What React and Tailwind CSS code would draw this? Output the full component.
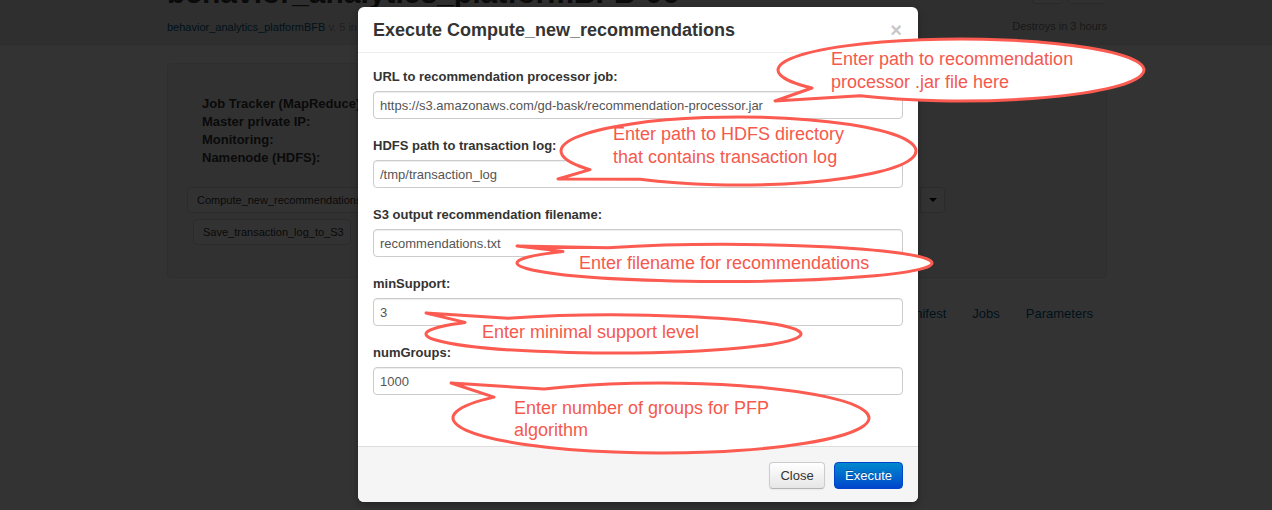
import React from 'react';

const fields = [
  { label: 'URL to recommendation processor job:', value: 'https://s3.amazonaws.com/gd-bask/recommendation-processor.jar' },
  { label: 'HDFS path to transaction log:', value: '/tmp/transaction_log' },
  { label: 'S3 output recommendation filename:', value: 'recommendations.txt' },
  { label: 'minSupport:', value: '3' },
  { label: 'numGroups:', value: '1000' },
];

// skitch style notes drawn over the screenshot
const notes = [
  { cx: 961, cy: 70, rx: 183, ry: 31, tip: [775, 101], ax: 812, bx: 860, upper: false, sweep: 1, x: 831, lines: [[59, 'Enter path to recommendation'], [82, 'processor .jar file here']] },
  { cx: 738.5, cy: 151, rx: 177.5, ry: 34, tip: [558, 179], ax: 590, bx: 640, upper: false, sweep: 1, x: 613, lines: [[134, 'Enter path to HDFS directory'], [157, 'that contains transaction log']] },
  { cx: 724.5, cy: 263, rx: 207.5, ry: 18.5, tip: [517, 246], ax: 563, bx: 608, upper: true, sweep: 0, x: 579, lines: [[263, 'Enter filename for recommendations']] },
  { cx: 613.5, cy: 334, rx: 187.5, ry: 19, tip: [426, 313], ax: 465, bx: 508, upper: true, sweep: 0, x: 482, lines: [[332, 'Enter minimal support level']] },
  { cx: 661, cy: 418, rx: 208, ry: 35, tip: [451, 383], ax: 494, bx: 544, upper: true, sweep: 0, x: 514, lines: [[408, 'Enter number of groups for PFP'], [430, 'algorithm']] },
];

const onEllipse = (n, x) => {
  const t = (x - n.cx) / n.rx;
  const dy = n.ry * Math.sqrt(1 - t * t);
  return [x, n.upper ? n.cy - dy : n.cy + dy];
};

const bubblePath = (n) => {
  const a = onEllipse(n, n.ax);
  const b = onEllipse(n, n.bx);
  return `M ${b[0]} ${b[1]} L ${n.tip[0]} ${n.tip[1]} L ${a[0]} ${a[1]} A ${n.rx} ${n.ry} 0 1 ${n.sweep} ${b[0]} ${b[1]} Z`;
};

const Notes = () => (
  <svg className="pointer-events-none absolute inset-0" width="1272" height="510" viewBox="0 0 1272 510">
    {notes.map((n, i) => (
      <g key={i}>
        <path d={bubblePath(n)} fill="#fff" stroke="#fb5b50" strokeWidth="3" strokeLinejoin="round" />
        {n.lines.map(([y, t]) => (
          <text key={t} x={n.x} y={y} dominantBaseline="central" className="fill-[#f5594d] text-[18px]">
            {t}
          </text>
        ))}
      </g>
    ))}
  </svg>
);

const Page = () => (
  <div>
    <div className="h-[45px] border-b border-[#dedede] bg-[#ececec]">
      <div className="ml-[167px] flex w-[940px] justify-between">
        <div>
          <h1 className="mt-[-22px] whitespace-nowrap text-[30px] font-bold leading-[30px] text-[#333]">
            behavior_analytics_platformBFB-06
          </h1>
          <p className="mt-[12px] whitespace-nowrap text-[11px] leading-[14px] text-[#999]">
            <span className="text-[#005a88]">behavior_analytics_platformBFB</span> v. 5 in production
          </p>
        </div>
        <div className="flex flex-col items-end">
          <div className="mt-[-22px] flex gap-[5px]">
            <span className="h-[26px] w-[31px] rounded-[4px] border border-[#ccc] bg-[#f5f5f5]" />
            <span className="h-[26px] w-[39px] rounded-[4px] border border-[#ccc] bg-[#f5f5f5]" />
          </div>
          <p className="mt-[15px] text-[11px] leading-[14px] text-[#777]">Destroys in 3 hours</p>
        </div>
      </div>
    </div>

    <div className="ml-[167px] mt-[18px] h-[215px] w-[940px] rounded-[4px] border border-[#e3e3e3] bg-[#f5f5f5] pl-[19px] pt-[31px]">
      <div className="pl-[15px] text-[13px] font-bold leading-[18px] text-[#333]">
        <p>Job Tracker (MapReduce):</p>
        <p>Master private IP:</p>
        <p>Monitoring:</p>
        <p>Namenode (HDFS):</p>
      </div>
      <div className="mt-[20px] flex h-[26px] w-[758px] rounded-[4px] border border-[#d5d5d5] bg-[#fafafa] text-[11px] text-[#333]">
        <span className="flex flex-1 items-center pl-[9px]">Compute_new_recommendations</span>
        <span className="flex w-[24px] items-center justify-center border-l border-[#d5d5d5]">
          <span className="border-x-[4px] border-t-[4px] border-x-transparent border-t-[#000]" />
        </span>
      </div>
      <div className="ml-[6px] mt-[6px] flex h-[26px] w-[158px] items-center rounded-[4px] border border-[#d5d5d5] bg-[#fafafa] pl-[9px] text-[11px] text-[#333]">
        Save_transaction_log_to_S3
      </div>
    </div>

    <div className="ml-[167px] mt-[26px] flex w-[940px] justify-end pr-[1px] text-[13px] leading-[20px] text-[#005a88]">
      <span className="px-[13px]">Overview</span>
      <span className="px-[13px]">Manifest</span>
      <span className="px-[13px]">Jobs</span>
      <span className="px-[13px]">Parameters</span>
    </div>
  </div>
);

const Modal = () => (
  <div className="absolute left-[358px] top-[7px] w-[560px] rounded-[6px] bg-white shadow-[0_3px_7px_rgba(0,0,0,0.3)]">
    <div className="flex h-[46px] items-center justify-between border-b border-[#eee] px-[15px]">
      <h3 className="text-[18px] font-bold leading-[30px] text-[#333]">Execute Compute_new_recommendations</h3>
      <span className="mr-[1px] text-[20px] font-bold leading-[20px] text-[#c8c8c8]">×</span>
    </div>
    <div className="px-[15px] pb-[51px] pt-[15px]">
      {fields.map((f, i) => (
        <div key={f.label} className={i < fields.length - 1 ? 'mb-[18px]' : ''}>
          <label className="mb-[5px] block text-[13px] font-bold leading-[18px] text-[#333]">{f.label}</label>
          <input
            readOnly
            value={f.value}
            className="block h-[28px] w-full rounded-[4px] border border-[#ccc] px-[6px] text-[13px] text-[#555] shadow-[inset_0_1px_1px_rgba(0,0,0,0.075)] outline-none"
          />
        </div>
      ))}
    </div>
    <div className="flex h-[56px] justify-end gap-[9px] rounded-b-[6px] border-t border-[#ddd] bg-[#f5f5f5] px-[15px] pt-[15px]">
      <button className="h-[27px] w-[56px] rounded-[4px] border border-[#ccc] border-b-[#b3b3b3] bg-gradient-to-b from-white to-[#e6e6e6] text-[13px] text-[#333] shadow-[inset_0_1px_0_rgba(255,255,255,0.2),0_1px_2px_rgba(0,0,0,0.05)]">
        Close
      </button>
      <button className="h-[27px] w-[69px] rounded-[4px] border border-[#0044cc] bg-gradient-to-b from-[#0088cc] to-[#0044cc] text-[13px] text-white [text-shadow:0_-1px_0_rgba(0,0,0,0.25)]">
        Execute
      </button>
    </div>
  </div>
);

export default function App() {
  return (
    <div className="relative h-[510px] w-full overflow-hidden bg-white font-['Liberation_Sans',Arial,sans-serif]">
      <Page />
      <div className="absolute inset-0 bg-black/80" />
      <Modal />
      <Notes />
    </div>
  );
}
